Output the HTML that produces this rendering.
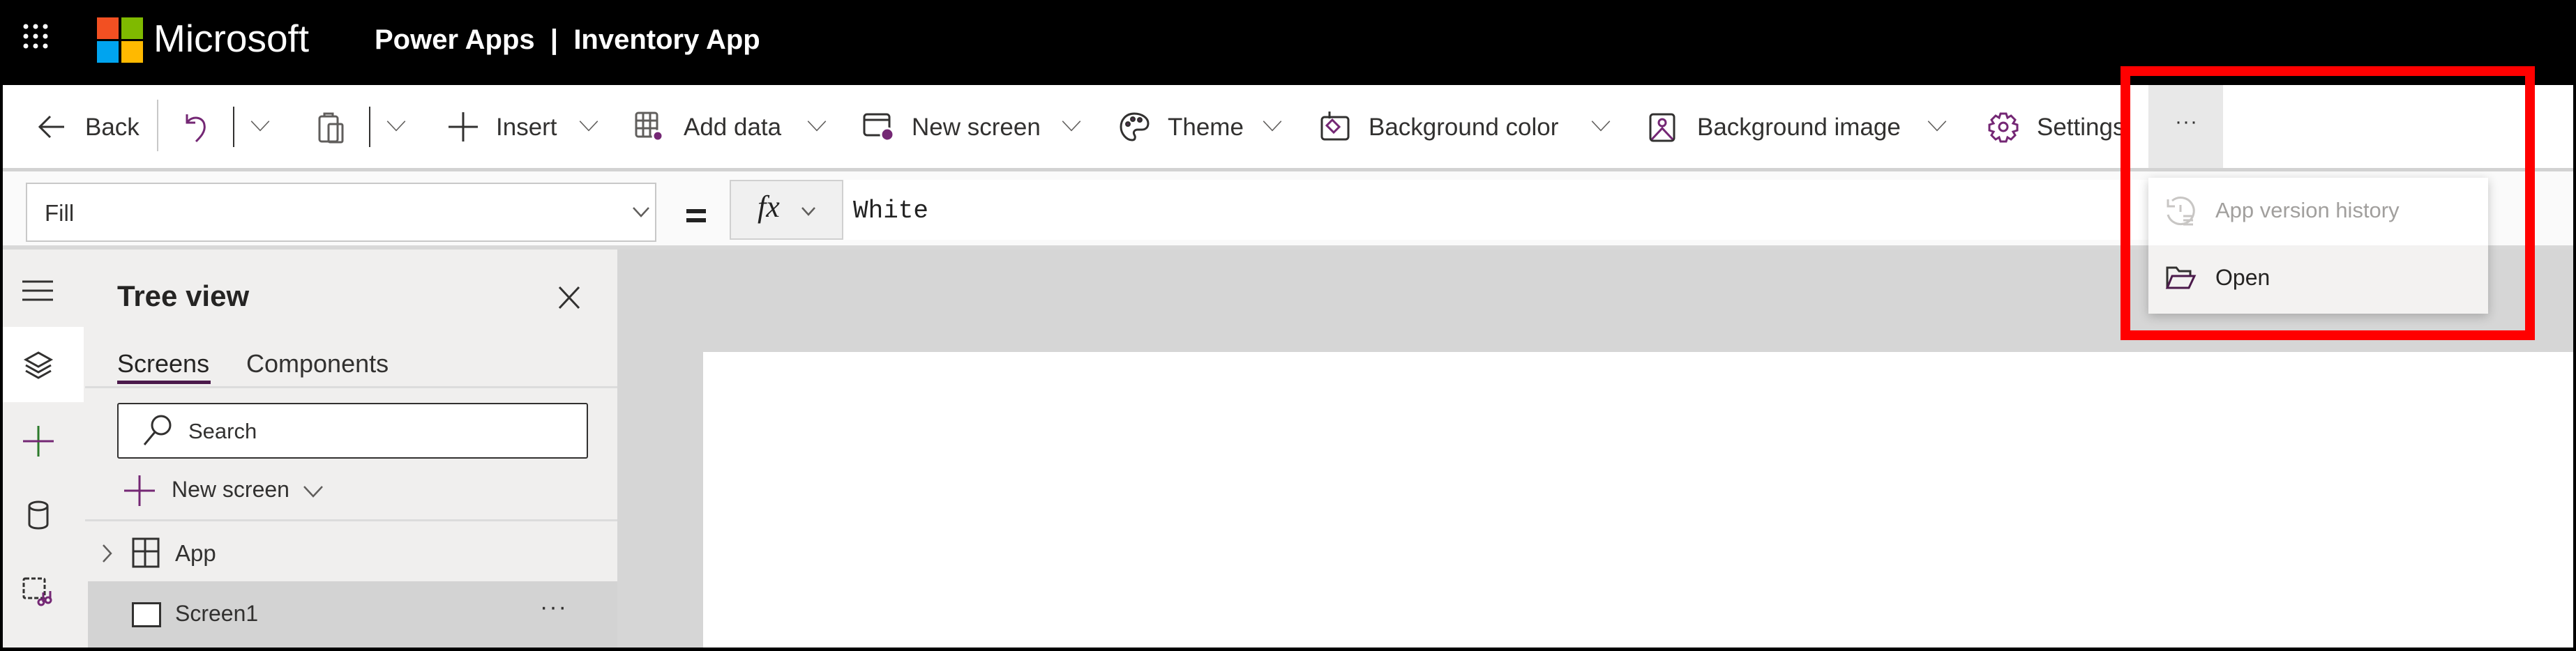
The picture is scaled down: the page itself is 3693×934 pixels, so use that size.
<!DOCTYPE html>
<html><head><meta charset="utf-8">
<style>
*{margin:0;padding:0;box-sizing:border-box}
body{width:3693px;height:934px;overflow:hidden;background:#000;font-family:"Liberation Sans",sans-serif;color:#323130;position:relative}
.a{position:absolute}
.t{position:absolute;white-space:nowrap;line-height:1}
.tb{font-size:35px;top:165px;color:#323130}
svg{position:absolute;overflow:visible}
.chev{position:absolute;top:172px;width:30px;height:17px}
</style></head><body>
<div class="a" style="left:4px;top:3px;width:3685px;height:926px;background:#fff"></div>
<div class="a" style="left:4px;top:3px;width:3685px;height:119px;background:#000"></div>
<svg style="left:33px;top:34px" width="40" height="40" viewBox="0 0 40 40" fill="#fff">
<circle cx="4" cy="4" r="3.5"/><circle cx="18" cy="4" r="3.5"/><circle cx="32" cy="4" r="3.5"/>
<circle cx="4" cy="18" r="3.5"/><circle cx="18" cy="18" r="3.5"/><circle cx="32" cy="18" r="3.5"/>
<circle cx="4" cy="32" r="3.5"/><circle cx="18" cy="32" r="3.5"/><circle cx="32" cy="32" r="3.5"/></svg>
<div class="a" style="left:139px;top:25px;width:31px;height:31px;background:#f25022"></div>
<div class="a" style="left:174px;top:25px;width:31px;height:31px;background:#7fba00"></div>
<div class="a" style="left:139px;top:59px;width:31px;height:31px;background:#00a4ef"></div>
<div class="a" style="left:174px;top:59px;width:31px;height:31px;background:#ffb900"></div>
<div class="t" style="left:220px;top:28px;font-size:55px;color:#fff">Microsoft</div>
<div class="t" style="left:537px;top:37px;font-size:40px;color:#fff;font-weight:bold">Power Apps &nbsp;|&nbsp; Inventory App</div>

<div class="a" style="left:4px;top:241px;width:3685px;height:5px;background:#d2d2d2"></div>
<svg style="left:54px;top:164px" width="40" height="36" viewBox="0 0 40 36" fill="none" stroke="#323130" stroke-width="3"><path d="M38 18H4M18 3L3 18l15 15"/></svg>
<div class="t tb" style="left:122px">Back</div>
<div class="a" style="left:225px;top:143px;width:2px;height:74px;background:#c8c8c8"></div>
<svg style="left:264px;top:160px" width="40" height="44" viewBox="0 0 40 44" fill="none" stroke="#742774" stroke-width="3"><path d="M4 4v12h12M5 15c6-9 22-8 24 4 2 10-6 18-12 24"/></svg>
<div class="a" style="left:334px;top:153px;width:2px;height:58px;background:#323130"></div>
<svg class="chev" style="left:358px" viewBox="0 0 34 20" fill="none" stroke="#605e5c" stroke-width="1.8"><path d="M2 2l15 16L32 2"/></svg>
<svg style="left:455px;top:160px" width="40" height="46" viewBox="0 0 40 46" fill="none" stroke="#605e5c" stroke-width="3"><rect x="3" y="7" width="26" height="36" rx="3"/><rect x="16" y="18" width="20" height="26" rx="2"/><path d="M10 7V3h12v4"/></svg>
<div class="a" style="left:529px;top:153px;width:2px;height:58px;background:#323130"></div>
<svg class="chev" style="left:553px" viewBox="0 0 34 20" fill="none" stroke="#605e5c" stroke-width="1.8"><path d="M2 2l15 16L32 2"/></svg>
<svg style="left:643px;top:161px" width="42" height="42" viewBox="0 0 42 42" fill="none" stroke="#323130" stroke-width="3"><path d="M21 0v42M0 21h42"/></svg>
<div class="t tb" style="left:711px">Insert</div>
<svg class="chev" style="left:829px" viewBox="0 0 34 20" fill="none" stroke="#605e5c" stroke-width="1.8"><path d="M2 2l15 16L32 2"/></svg>
<svg style="left:910px;top:160px" width="42" height="44" viewBox="0 0 42 44" fill="none" stroke="#605e5c" stroke-width="3"><rect x="2" y="2" width="30" height="34" rx="3"/><path d="M2 13h30M2 24h30M12 2v34M22 2v34"/><circle cx="33" cy="35" r="7" fill="#742774" stroke="#fff"/></svg>
<div class="t tb" style="left:980px">Add data</div>
<svg class="chev" style="left:1156px" viewBox="0 0 34 20" fill="none" stroke="#605e5c" stroke-width="1.8"><path d="M2 2l15 16L32 2"/></svg>
<svg style="left:1237px;top:162px" width="46" height="42" viewBox="0 0 46 42" fill="none" stroke="#323130" stroke-width="3"><rect x="2" y="2" width="36" height="30" rx="4"/><path d="M2 10h36"/><circle cx="35" cy="31" r="9" fill="#742774" stroke="#fff"/></svg>
<div class="t tb" style="left:1307px">New screen</div>
<svg class="chev" style="left:1521px" viewBox="0 0 34 20" fill="none" stroke="#605e5c" stroke-width="1.8"><path d="M2 2l15 16L32 2"/></svg>
<svg style="left:1604px;top:160px" width="44" height="44" viewBox="0 0 44 44" fill="none" stroke="#323130" stroke-width="3"><path d="M22 3C10 3 3 12 3 22s8 19 16 19c5 0 5-5 3-8-2-4 1-7 5-7h6c6 0 9-4 9-9C42 9 33 3 22 3z"/><circle cx="13" cy="18" r="2.5" fill="#742774"/><circle cx="20" cy="11" r="2.5" fill="#742774"/><circle cx="30" cy="12" r="2.5" fill="#742774"/></svg>
<div class="t tb" style="left:1674px">Theme</div>
<svg class="chev" style="left:1809px" viewBox="0 0 34 20" fill="none" stroke="#605e5c" stroke-width="1.8"><path d="M2 2l15 16L32 2"/></svg>
<svg style="left:1892px;top:158px" width="46" height="46" viewBox="0 0 46 46" fill="none" stroke="#323130" stroke-width="3"><rect x="3" y="10" width="38" height="32" rx="4"/><path d="M10 22l8-8 10 10-8 8z" stroke="#742774"/><path d="M14 2v10"/></svg>
<div class="t tb" style="left:1962px">Background color</div>
<svg class="chev" style="left:2280px" viewBox="0 0 34 20" fill="none" stroke="#605e5c" stroke-width="1.8"><path d="M2 2l15 16L32 2"/></svg>
<svg style="left:2364px;top:162px" width="38" height="42" viewBox="0 0 38 42" fill="none" stroke="#323130" stroke-width="3"><rect x="2" y="2" width="34" height="38" rx="4"/><circle cx="19" cy="14" r="5" stroke="#742774"/><path d="M4 38l15-16 15 16" stroke="#742774"/></svg>
<div class="t tb" style="left:2433px">Background image</div>
<svg class="chev" style="left:2762px" viewBox="0 0 34 20" fill="none" stroke="#605e5c" stroke-width="1.8"><path d="M2 2l15 16L32 2"/></svg>
<svg style="left:2850px;top:160px" width="44" height="44" viewBox="0 0 44 44" fill="none" stroke="#742774" stroke-width="3"><circle cx="22" cy="22" r="6"/><path d="M18 3h8l2 6 5-3 6 6-3 5 6 2v8l-6 2 3 5-6 6-5-3-2 6h-8l-2-6-5 3-6-6 3-5-6-2v-8l6-2-3-5 6-6 5 3z"/></svg>
<div class="t tb" style="left:2920px">Settings</div>
<div class="a" style="left:3080px;top:122px;width:107px;height:119px;background:#e8e8e8"></div>
<div class="t" style="left:3118px;top:160px;font-size:30px;color:#323130;letter-spacing:1px">···</div>

<div class="a" style="left:4px;top:246px;width:3685px;height:108px;background:#fafafa"></div>
<div class="a" style="left:4px;top:352px;width:3685px;height:6px;background:#d8d8d8"></div>
<div class="a" style="left:37px;top:262px;width:904px;height:85px;background:#fff;border:2px solid #c8c8c8"></div>
<div class="t" style="left:64px;top:289px;font-size:33px;color:#323130">Fill</div>
<svg style="left:906px;top:296px" width="26" height="16" viewBox="0 0 26 16" fill="none" stroke="#605e5c" stroke-width="2.5"><path d="M2 2l11 12L24 2"/></svg>
<div class="a" style="left:984px;top:300px;width:28px;height:6px;background:#222"></div>
<div class="a" style="left:984px;top:313px;width:28px;height:6px;background:#222"></div>
<div class="a" style="left:1046px;top:258px;width:163px;height:86px;background:#f0f0f0;border:2px solid #d0d0d0"></div>
<div class="t" style="left:1086px;top:275px;font-size:44px;font-family:'Liberation Serif',serif;font-style:italic;color:#222">fx</div>
<svg style="left:1148px;top:296px" width="22" height="14" viewBox="0 0 22 14" fill="none" stroke="#605e5c" stroke-width="2.5"><path d="M2 2l9 10L20 2"/></svg>
<div class="a" style="left:1209px;top:258px;width:1900px;height:86px;background:#fff"></div>
<div class="t" style="left:1223px;top:285px;font-size:36px;font-family:'Liberation Mono',monospace;color:#222">White</div>

<div class="a" style="left:4px;top:358px;width:3685px;height:571px;background:#d6d6d6"></div>
<div class="a" style="left:1008px;top:505px;width:2681px;height:424px;background:#fff"></div>
<div class="a" style="left:4px;top:358px;width:118px;height:571px;background:#f0efee"></div>
<div class="a" style="left:4px;top:469px;width:116px;height:108px;background:#fff"></div>
<svg style="left:32px;top:402px" width="44" height="30" viewBox="0 0 44 30" fill="none" stroke="#323130" stroke-width="3"><path d="M0 2h44M0 15h44M0 28h44"/></svg>
<svg style="left:34px;top:504px" width="42" height="40" viewBox="0 0 42 40" fill="none" stroke="#323130" stroke-width="3"><path d="M21 2L3 12l18 10 18-10zM3 20l18 10 18-10M3 28l18 10 18-10"/></svg>
<svg style="left:33px;top:611px" width="44" height="44" viewBox="0 0 44 44" fill="none" stroke-width="3"><path d="M22 0v44" stroke="#2b7a2b"/><path d="M0 22h44" stroke="#742774"/></svg>
<svg style="left:40px;top:718px" width="30" height="42" viewBox="0 0 30 42" fill="none" stroke="#323130" stroke-width="3"><path d="M2 8v26c0 8 26 8 26 0V8"/><ellipse cx="15" cy="8" rx="13" ry="6"/></svg>
<svg style="left:32px;top:828px" width="46" height="42" viewBox="0 0 46 42" fill="none" stroke="#323130" stroke-width="3"><rect x="2" y="2" width="30" height="28" rx="2" stroke-dasharray="6 3"/><path d="M30 22v14M40 20v12" stroke="#742774"/><circle cx="27" cy="36" r="4" stroke="#742774"/><circle cx="37" cy="33" r="4" stroke="#742774"/></svg>
<div class="a" style="left:122px;top:358px;width:763px;height:571px;background:#f0efee"></div>
<div class="t" style="left:168px;top:404px;font-size:42px;font-weight:bold;color:#252423">Tree view</div>
<svg style="left:800px;top:410px" width="32" height="34" viewBox="0 0 32 34" fill="none" stroke="#323130" stroke-width="3"><path d="M2 2l28 30M30 2L2 32"/></svg>
<div class="t" style="left:168px;top:504px;font-size:36px;color:#252423">Screens</div>
<div class="t" style="left:353px;top:504px;font-size:36px;color:#323130">Components</div>
<div class="a" style="left:168px;top:546px;width:134px;height:5px;background:#4b1a4b"></div>
<div class="a" style="left:122px;top:554px;width:763px;height:3px;background:#dcdcdc"></div>
<div class="a" style="left:168px;top:578px;width:675px;height:80px;background:#fff;border:2px solid #323130;border-radius:3px"></div>
<svg style="left:204px;top:594px" width="44" height="46" viewBox="0 0 44 46" fill="none" stroke="#323130" stroke-width="3"><circle cx="27" cy="16" r="13"/><path d="M18 26L3 44"/></svg>
<div class="t" style="left:270px;top:603px;font-size:31px;color:#323130">Search</div>
<svg style="left:178px;top:682px" width="44" height="44" viewBox="0 0 44 44" fill="none" stroke="#742774" stroke-width="3"><path d="M22 0v44M0 22h44"/></svg>
<div class="t" style="left:246px;top:686px;font-size:32px;color:#323130">New screen</div>
<svg style="left:434px;top:696px" width="30" height="18" viewBox="0 0 30 18" fill="none" stroke="#605e5c" stroke-width="2.5"><path d="M2 2l13 14L28 2"/></svg>
<div class="a" style="left:122px;top:745px;width:763px;height:3px;background:#dcdcdc"></div>
<svg style="left:146px;top:780px" width="16" height="28" viewBox="0 0 16 28" fill="none" stroke="#605e5c" stroke-width="2.5"><path d="M2 2l11 12L2 26"/></svg>
<svg style="left:189px;top:771px" width="40" height="44" viewBox="0 0 40 44" fill="none" stroke="#323130" stroke-width="3"><rect x="2" y="2" width="36" height="40"/><path d="M2 20h36M19 2v40"/></svg>
<div class="t" style="left:251px;top:777px;font-size:33px;color:#323130">App</div>
<div class="a" style="left:126px;top:834px;width:759px;height:95px;background:#d3d3d3"></div>
<div class="a" style="left:189px;top:864px;width:42px;height:36px;background:#fff;border:3px solid #323130"></div>
<div class="t" style="left:251px;top:864px;font-size:32px;color:#323130">Screen1</div>
<div class="t" style="left:774px;top:854px;font-size:34px;color:#323130;letter-spacing:2px">···</div>

<div class="a" style="left:3080px;top:255px;width:487px;height:195px;background:#fff;box-shadow:0 4px 14px rgba(0,0,0,0.22)"></div>
<svg style="left:3104px;top:280px" width="46" height="46" viewBox="0 0 46 46" fill="none" stroke="#c8c6c4" stroke-width="3"><path d="M10 8a19 19 0 1 1-6 20"/><path d="M4 6v10h10"/><path d="M22 14v10M26 30h14M26 36h14M26 42h14"/></svg>
<div class="t" style="left:3176px;top:286px;font-size:31px;color:#a19f9d">App version history</div>
<div class="a" style="left:3080px;top:352px;width:487px;height:98px;background:#f3f2f1"></div>
<svg style="left:3104px;top:380px" width="44" height="36" viewBox="0 0 44 36" fill="none" stroke="#323130" stroke-width="3"><path d="M3 33V4h13l4 5h16v6"/><path d="M3 33l7-17h32l-8 17z" stroke="#4b1a4b"/></svg>
<div class="t" style="left:3176px;top:382px;font-size:32px;color:#252423">Open</div>

<div class="a" style="left:3040px;top:95px;width:594px;height:393px;border:14px solid #ff0000"></div>
</body></html>
